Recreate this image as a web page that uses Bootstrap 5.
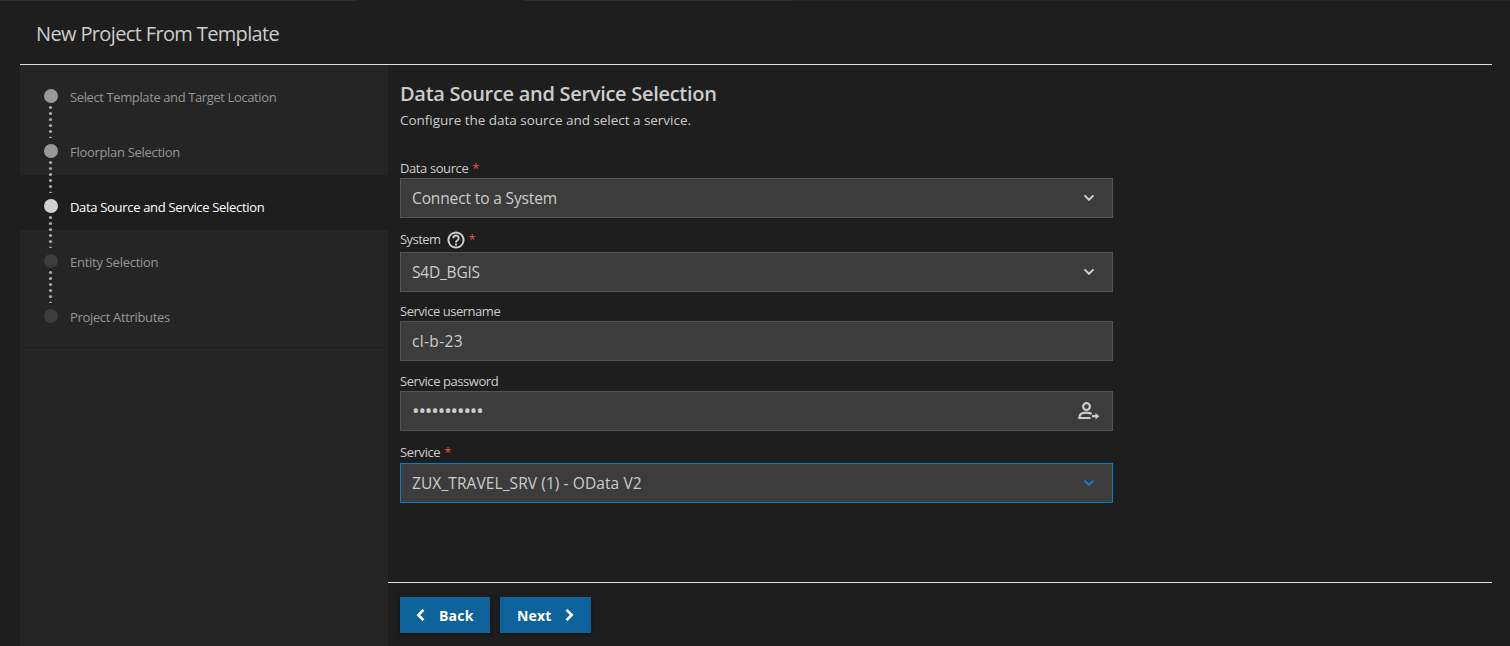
<!DOCTYPE html>
<html lang="en">
<head>
<meta charset="utf-8">
<title>New Project From Template</title>
<link href="https://cdn.jsdelivr.net/npm/bootstrap@5.3.0/dist/css/bootstrap.min.css" rel="stylesheet">
<style>
body{background:#1e1e1e;color:#ccc;font-family:"Open Sans","Noto Sans",sans-serif;font-size:13px;height:646px;overflow:hidden;white-space:nowrap}
.tabline{height:1px;background:linear-gradient(90deg,#2d2d2d 141px,#252526 141px 142px,#2d2d2d 142px 265px,#252526 265px 266px,#2d2d2d 266px 357px,#1e1e1e 357px 524px,#2d2d2d 524px 792px,#252526 792px)}
.wiz-title{height:64px;margin:0 18px 0 20px;padding:19px 16px 0;border-bottom:1px solid #e0e0e0;font-size:20px;line-height:28px;letter-spacing:-.64px;font-weight:400}
.wiz-body{height:581px;margin:0 18px 0 20px}
.steps{width:368px;background:#252526}
.step{height:55px;padding:22px 0 0 24px;gap:12px;color:#969696;line-height:20px;letter-spacing:-.32px}
.step.active{background:#1e1e1e;color:#fff}
.step:last-child{height:63px;border-bottom:1px solid #1e1e1e}
.step svg{width:14px;height:50px;margin-top:2px;position:relative;z-index:1;fill:#999;flex:none}
.step .dots{fill:#aaa}
.step.active circle:first-child{fill:#d0d0d0}
.step.todo circle:first-child{fill:#3c3c3c}
.wiz-main{height:518px;padding:15px 12px 0;border-bottom:1px solid #e0e0e0}
.wiz-main h2{font-size:20px;line-height:28px;letter-spacing:-.29px;font-weight:600}
.intro{font-size:13.5px;line-height:20px;letter-spacing:-.03px;margin-top:2px}
.wiz-form{width:713px}
.cap{line-height:18px;letter-spacing:-.43px}
.cap i{color:#f14c4c;font-style:normal;margin-left:4px}
.box{height:40px;background:#3c3c3c;border:1px solid #555;padding:0 17px 0 11px;font-size:15.5px;letter-spacing:-.18px}
.box>span{padding-top:2px}
.box.focus{border-color:#007fd4}
.btn-wiz{height:36px;background:#0e639c;color:#fff;font-size:14px;font-weight:700;border-radius:0;box-shadow:0 1px 3px rgba(0,0,0,.5);letter-spacing:.2px;border:0;padding:0}
.btn-wiz span{padding-top:1px}
</style>
</head>
<body>
<div class="tabline"></div>
<h1 class="wiz-title mb-0">New Project From Template</h1>
<svg width="0" height="0" class="position-absolute"><defs>
<g id="dots"><circle cx="6.5" cy="18.5" r="1.6"/><circle cx="6.5" cy="24.5" r="1.6"/><circle cx="6.5" cy="30.5" r="1.6"/><circle cx="6.5" cy="36.5" r="1.6"/><circle cx="6.5" cy="42.5" r="1.6"/><path d="M5 49a1.5 1.5 0 0 1 3 0z"/></g>
<path id="chev" d="M1.5 1.4 6 5.8l4.5-4.4" fill="none" stroke="currentColor" stroke-width="2"/>
</defs></svg>
<div class="wiz-body d-flex">
  <nav class="steps">
    <div class="step d-flex"><svg><circle cx="7" cy="7" r="7"/><use href="#dots" class="dots"/></svg><span style="letter-spacing:-.39px">Select Template and Target Location</span></div>
    <div class="step d-flex"><svg><circle cx="7" cy="7" r="7"/><use href="#dots" class="dots"/></svg><span style="letter-spacing:-.3px">Floorplan Selection</span></div>
    <div class="step d-flex active"><svg><circle cx="7" cy="7" r="7"/><use href="#dots" class="dots"/></svg><span>Data Source and Service Selection</span></div>
    <div class="step d-flex todo"><svg><circle cx="7" cy="7" r="7"/><use href="#dots" class="dots"/></svg><span style="letter-spacing:-.27px">Entity Selection</span></div>
    <div class="step d-flex todo"><svg><circle cx="7" cy="7" r="7"/></svg><span style="letter-spacing:-.34px">Project Attributes</span></div>
  </nav>
  <div class="flex-grow-1">
    <main class="wiz-main">
      <h2 class="mb-0">Data Source and Service Selection</h2>
      <p class="intro mb-0">Configure the data source and select a service.</p>
      <form class="wiz-form">
        <div class="cap d-flex" style="margin-top:29px;letter-spacing:-.4px">Data source<i>*</i></div>
        <div class="box d-flex align-items-center justify-content-between" style="margin-top:1px;letter-spacing:-.13px"><span>Connect to a System</span><svg width="12" height="8"><use href="#chev"/></svg></div>
        <div class="cap d-flex" style="margin-top:12px;letter-spacing:-.55px">System
          <svg width="18" height="18" style="margin:1px 0 0 6px" fill="none" stroke="#ccc" stroke-width="2"><circle cx="9" cy="9" r="7.6"/><path d="M6.3 7.2a2.7 2.7 0 1 1 4.3 2.1C9.6 10 9 10.3 9 11.4M9 12.6v1.8"/></svg><i>*</i></div>
        <div class="box d-flex align-items-center justify-content-between" style="margin-top:3px;letter-spacing:-.2px"><span>S4D_BGIS</span><svg width="12" height="8"><use href="#chev"/></svg></div>
        <div class="cap" style="margin-top:10px;letter-spacing:-.47px">Service username</div>
        <div class="box d-flex align-items-center" style="margin-top:1px;letter-spacing:.35px"><span>cl-b-23</span></div>
        <div class="cap" style="margin-top:11px">Service password</div>
        <div class="box d-flex align-items-center justify-content-between" style="margin-top:1px;padding-right:12px"><span style="letter-spacing:-1.09px;font-size:20px;padding:0">•••••••••••</span>
          <svg width="23" height="18" fill="none" stroke="#ccc" stroke-width="2.2"><circle cx="9.5" cy="4.6" r="3.4"/><path d="M14.4 12.2C13.4 11 11.8 10.6 9 10.6 4.5 10.6 2.3 12.4 2.3 16H13.5M15 14.2h5.5" /><path d="M18.5 11v6.4l3.8-3.2z" fill="#ccc" stroke="none"/></svg></div>
        <div class="cap d-flex" style="margin-top:12px;letter-spacing:-.4px">Service<i>*</i></div>
        <div class="box focus d-flex align-items-center justify-content-between" style="margin-top:2px;letter-spacing:.09px"><span>ZUX_TRAVEL_SRV (1) - OData V2</span><svg width="12" height="8" style="color:#1b76cc"><use href="#chev"/></svg></div>
      </form>
    </main>
    <footer class="d-flex" style="padding:14px 12px 0;gap:10px">
      <button class="btn btn-wiz d-flex align-items-center" style="width:90px;padding-left:16px;gap:14px"><svg width="9" height="12" fill="none" stroke="#fff" stroke-width="2.6"><path d="M7.5.8 2.3 6l5.2 5.2"/></svg><span>Back</span></button>
      <button class="btn btn-wiz d-flex align-items-center" style="width:91px;padding-left:17px;gap:13px"><span>Next</span><svg width="9" height="12" fill="none" stroke="#fff" stroke-width="2.6"><path d="M1.5.8 6.7 6l-5.2 5.2"/></svg></button>
    </footer>
  </div>
</div>
<script src="https://cdn.jsdelivr.net/npm/bootstrap@5.3.0/dist/js/bootstrap.bundle.min.js"></script>
</body>
</html>
